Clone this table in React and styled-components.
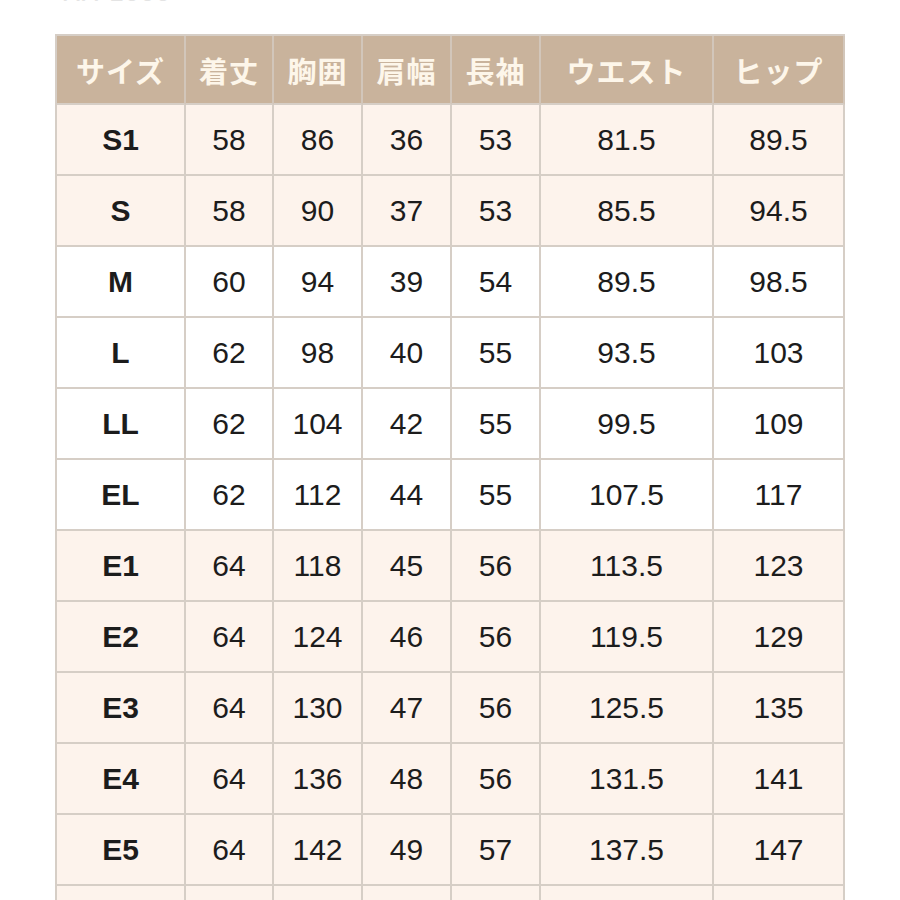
import styled, { createGlobalStyle } from "styled-components";

const GlobalStyle = createGlobalStyle`
  html, body {
    margin: 0;
    padding: 0;
    background: #ffffff;
  }
  body {
    font-family: "Liberation Sans", Arial, "Noto Sans CJK JP", sans-serif;
  }
`;

const Page = styled.div`
  width: 900px;
  height: 900px;
  overflow: hidden;
  padding: 0 0 0 55px;
  box-sizing: border-box;
`;

const Caption = styled.div`
  margin: -21px 0 29px 8px;
  height: 26px;
  font-size: 26px;
  line-height: 26px;
  color: #e4e4e4;
  letter-spacing: 1px;
`;

const Table = styled.table`
  width: 790px;
  table-layout: fixed;
  border-collapse: separate;
  border-spacing: 0;
  border-left: 2px solid #d6cec6;
  border-top: 2px solid #d6cec6;
`;

const HeadCell = styled.th`
  height: 69px;
  padding: 0;
  box-sizing: border-box;
  background: #c9b39c;
  color: #fdf6ea;
  font-family: "Noto Sans CJK JP", sans-serif;
  font-size: 29px;
  font-weight: 700;
  letter-spacing: 1px;
  text-align: center;
  border-right: 2px solid #d2c6ba;
  border-bottom: 2px solid #d6cec6;
`;

const Row = styled.tr`
  background: ${(p) => (p.$tinted ? "#fdf3ec" : "#ffffff")};
`;

const Cell = styled.td`
  height: 71px;
  padding: 0;
  box-sizing: border-box;
  text-align: center;
  font-size: 30px;
  font-weight: ${(p) => (p.$bold ? 700 : 400)};
  color: #1c1c1c;
  border-right: 2px solid #d6cec6;
  border-bottom: 2px solid #d6cec6;
`;

const columns = [
  { label: "サイズ", width: 131 },
  { label: "着丈", width: 88 },
  { label: "胸囲", width: 89 },
  { label: "肩幅", width: 89 },
  { label: "長袖", width: 89 },
  { label: "ウエスト", width: 173 },
  { label: "ヒップ", width: 131 },
];

const rows = [
  ["S1", "58", "86", "36", "53", "81.5", "89.5"],
  ["S", "58", "90", "37", "53", "85.5", "94.5"],
  ["M", "60", "94", "39", "54", "89.5", "98.5"],
  ["L", "62", "98", "40", "55", "93.5", "103"],
  ["LL", "62", "104", "42", "55", "99.5", "109"],
  ["EL", "62", "112", "44", "55", "107.5", "117"],
  ["E1", "64", "118", "45", "56", "113.5", "123"],
  ["E2", "64", "124", "46", "56", "119.5", "129"],
  ["E3", "64", "130", "47", "56", "125.5", "135"],
  ["E4", "64", "136", "48", "56", "131.5", "141"],
  ["E5", "64", "142", "49", "57", "137.5", "147"],
  ["", "", "", "", "", "", ""],
];

const whiteRows = ["M", "L", "LL", "EL"];

export default function App() {
  return (
    <>
      <GlobalStyle />
      <Page>
        <Caption>XX-1000</Caption>
        <Table>
          <colgroup>
            {columns.map((c, i) => (
              <col key={c.label} style={{ width: i === 0 ? c.width - 2 : c.width }} />
            ))}
          </colgroup>
          <thead>
            <tr>
              {columns.map((c) => (
                <HeadCell key={c.label}>{c.label}</HeadCell>
              ))}
            </tr>
          </thead>
          <tbody>
            {rows.map((r, ri) => (
              <Row key={ri} $tinted={!whiteRows.includes(r[0])}>
                {r.map((v, i) => (
                  <Cell key={i} $bold={i === 0}>
                    {v}
                  </Cell>
                ))}
              </Row>
            ))}
          </tbody>
        </Table>
      </Page>
    </>
  );
}
